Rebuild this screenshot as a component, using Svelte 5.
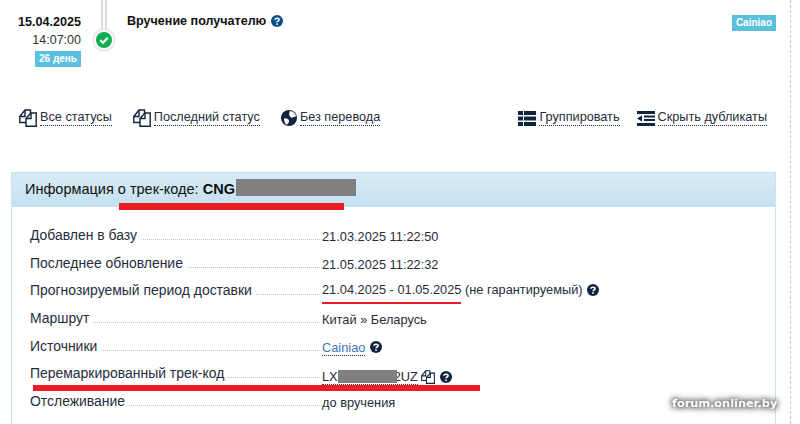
<script>
	const rows = [
		{ label: 'Добавлен в базу', value: '21.03.2025 11:22:50' },
		{ label: 'Последнее обновление', value: '21.05.2025 11:22:32' },
		{ label: 'Прогнозируемый период доставки', value: '21.04.2025 - 01.05.2025 (не гарантируемый)', help: true, mark: true },
		{ label: 'Маршрут', value: 'Китай » Беларусь' },
		{ label: 'Источники', link: 'Cainiao', help: true },
		{ label: 'Перемаркированный трек-код', code: true },
		{ label: 'Отслеживание', value: 'до вручения' }
	];
</script>

{#snippet copy()}
	<svg class="icon" viewBox="0 0 18 18" width="18" height="18" fill="#fff" stroke="#10233f" stroke-width="1.4">
		<path d="M.8 7.500 6 1h5.500v12.500H.8z" />
		<path d="M.8 7.500H6V1" fill="none" />
		<path d="M7 9.500 12 4h5.200v13.200H7z" />
		<path d="M7 9.500h5V4" fill="none" />
	</svg>
{/snippet}

{#snippet help(color)}
	<svg class="help" viewBox="0 0 12 12" width="12" height="12">
		<circle cx="6" cy="6" r="6" fill={color} />
		<path d="M4 4.700C4 2.600 8.100 2.600 8.100 4.700 8.100 6 6 6 6 7.300" fill="none" stroke="#fff" stroke-width="1.500" />
		<rect x="5.200" y="8.300" width="1.600" height="1.600" fill="#fff" />
	</svg>
{/snippet}

<div class="page">
	<section class="event">
		<div class="when">
			<b>15.04.2025</b>
			<span class="time">14:07:00</span>
			<span class="tag">26 день</span>
		</div>
		<div class="track">
			<div class="rail"></div>
			<div class="dot">
				<svg viewBox="0 0 16 16" width="16" height="16">
					<circle cx="8" cy="8" r="8" fill="#0fae52" />
					<path d="M4.200 8.200 7 10.800 11.800 5.800" fill="none" stroke="#fff" stroke-width="2.200" />
				</svg>
			</div>
		</div>
		<div class="status">
			<b>Вручение получателю</b>
			{@render help('#0b4f8a')}
		</div>
		<span class="tag source">Cainiao</span>
	</section>

	<nav class="tools">
		<a href="#a">{@render copy()}<span>Все статусы</span></a>
		<a href="#b">{@render copy()}<span>Последний статус</span></a>
		<a href="#c">
			<svg class="icon" viewBox="0 0 16 16" width="16" height="16">
				<circle cx="8" cy="8" r="8" fill="#10233f" />
				<path d="M9 1c3 .3 5 2 6 5-1 1.500-2.500.5-3.500 1.500S9 7 8.500 5.500 8 3 9 1zM3 8.500c2-.5 5 .5 5 2.500s-1.500 3.500-2.500 3.500S3 11 3 8.500z" fill="#fff" />
			</svg>
			<span>Без перевода</span>
		</a>
		<a class="push" href="#d">
			<svg class="icon" viewBox="0 0 18 15" width="18" height="15" fill="#10233f">
				<rect width="5" height="4" /><rect x="6" width="12" height="4" />
				<rect y="5.500" width="5" height="4" /><rect x="6" y="5.500" width="12" height="4" />
				<rect y="11" width="5" height="4" /><rect x="6" y="11" width="12" height="4" />
			</svg>
			<span>Группировать</span>
		</a>
		<a href="#e">
			<svg class="icon" viewBox="0 0 18 15" width="18" height="15" fill="#10233f">
				<rect width="18" height="3" /><rect x="7" y="4.500" width="11" height="2" />
				<rect x="7" y="8" width="11" height="2" /><rect y="12" width="18" height="3" />
				<path d="M5 4.500v6L0 7.500z" />
			</svg>
			<span>Скрыть дубликаты</span>
		</a>
	</nav>

	<section class="panel">
		<header>
			Информация о трек-коде: <b>CNG</b>
			<i class="blur title-blur"></i>
			<i class="red title-red"></i>
		</header>
		<dl>
			{#each rows as row}
				<div class="row" class:high={row.mark} class:low={row.code}>
					<dt><span>{row.label}</span></dt>
					<dd>
						{#if row.code}
							<span class="code">LX<i class="blur code-blur"></i>2UZ</span>
							{@render copy()}
							{@render help('#10233f')}
							<i class="red code-red"></i>
						{:else if row.link}
							<a href="#s">{row.link}</a>
							{@render help('#10233f')}
						{:else}
							{row.value}
							{#if row.help}{@render help('#10233f')}{/if}
							{#if row.mark}<i class="red date-red"></i>{/if}
						{/if}
					</dd>
				</div>
			{/each}
		</dl>
	</section>
	<div class="dash"></div>
	<div class="stamp">forum.onliner.by</div>
</div>

<style>
	:global(body) {
		background: #fff;
	}

	.page {
		position: relative;
		width: 800px;
		height: 424px;
		overflow: hidden;
		font-family: "Liberation Sans", Arial, sans-serif;
		font-size: 13px;
		color: #1f2d3d;
	}

	.event {
		display: flex;
		height: 70px;
		padding: 0 24px 0 0;
	}

	.when {
		width: 81px;
		padding-top: 14px;
		display: flex;
		flex-direction: column;
		align-items: flex-end;
		line-height: 17px;
		color: #111;
		font-size: 12.600px;
	}

	.time {
		font-size: 12.500px;
		margin-top: 1px;
		line-height: 16px;
		color: #333;
	}

	.tag {
		background: #5bc0de;
		color: #fff;
		font-size: 10px;
		font-weight: bold;
		line-height: 16px;
		padding: 0 4px;
		margin-top: 3px;
	}

	.track {
		position: relative;
		width: 46px;
	}

	.rail {
		position: absolute;
		left: 20px;
		top: 0;
		width: 6px;
		height: 34px;
		box-sizing: border-box;
		border-left: 2px solid #d9dde0;
		border-right: 2px solid #d9dde0;
	}

	.dot {
		position: absolute;
		left: 13px;
		top: 30px;
		width: 16px;
		height: 16px;
		padding: 2px;
		background: #fff;
		border-radius: 50%;
		box-shadow: 0 0 0 1.500px #e4e6e8;
		line-height: 0;
	}

	.status {
		flex: 1;
		padding-top: 13px;
		font-size: 12.550px;
		line-height: 17px;
		color: #111;
	}

	.help {
		vertical-align: -1.500px;
		margin-left: 1px;
	}

	.source {
		align-self: flex-start;
		margin-top: 15px;
		height: 16px;
		padding: 0 4px;
	}

	.tools {
		display: flex;
		gap: 21px;
		height: 34px;
		margin-top: 38px;
		padding: 0 33px 0 19px;
		align-items: flex-start;
	}

	.tools a {
		display: flex;
		align-items: center;
		gap: 3px;
		color: #1f2d3d;
		text-decoration: none;
		font-size: 12.700px;
		height: 20px;
	}

	.tools a span {
		border-bottom: 1px dotted #1f2d3d;
		line-height: 15px;
	}

	.tools .push {
		margin-left: auto;
		margin-right: -4px;
	}

	.panel {
		margin: 30px 0 0 11px;
		width: 765px;
		height: 260px;
		box-sizing: border-box;
		border: 1px solid #c5e2f1;
		border-bottom: 0;
	}

	header {
		position: relative;
		height: 34px;
		padding-left: 13px;
		background: linear-gradient(#d9ebf6, #c3e0f0);
		font-size: 14.500px;
		line-height: 33px;
		color: #111;
	}

	.blur {
		background: #808080;
		display: inline-block;
	}

	.title-blur {
		position: absolute;
		left: 224px;
		top: 6px;
		width: 120px;
		height: 17px;
	}

	.red {
		position: absolute;
		background: #ed1c24;
		display: block;
	}

	.title-red {
		left: 107px;
		top: 30px;
		width: 225px;
		height: 7px;
	}

	dl {
		margin: 19px 0 0;
		padding: 0 0 0 18px;
	}

	.row {
		display: grid;
		grid-template-columns: 292px 1fr;
		height: 27.700px;
		align-items: start;
	}

	dt {
		display: flex;
		font-size: 13.950px;
		line-height: 18px;
	}

	dt span {
		padding-right: 4px;
		white-space: nowrap;
	}

	dt::after {
		content: "";
		flex: 1;
		height: 13px;
		border-bottom: 1px dotted #c4c4c4;
	}

	dd {
		position: relative;
		margin: 2px 0 0;
		font-size: 12.800px;
		line-height: 18px;
		color: #1f2d3d;
	}

	.high dd {
		margin-top: 0;
	}

	.low dd {
		margin-top: 4px;
	}

	dd .icon {
		vertical-align: -3px;
		width: 14px;
		height: 14px;
	}

	dd a {
		color: #3a75b5;
		text-decoration: none;
		border-bottom: 1px dotted #1f2d3d;
	}

	.code {
		border-bottom: 1px dotted #1f2d3d;
	}

	.code-blur {
		position: relative;
		width: 59px;
		height: 13px;
		margin-right: -3px;
		vertical-align: -2px;
	}

	.date-red {
		left: 0;
		top: 21px;
		width: 139px;
		height: 2px;
	}

	.code-red {
		left: -289px;
		top: 17px;
		width: 447px;
		height: 6px;
	}

	.dash {
		position: absolute;
		left: 790px;
		top: 0;
		height: 424px;
		border-left: 1px dashed #c8c8c8;
	}

	.stamp {
		position: absolute;
		left: 672px;
		top: 397px;
		font-family: "DejaVu Sans", sans-serif;
		font-size: 11.300px;
		font-weight: bold;
		color: #fff;
		text-shadow: 0 0 4px #555, 0 0 6px #555, 0 0 8px #777;
	}
</style>
